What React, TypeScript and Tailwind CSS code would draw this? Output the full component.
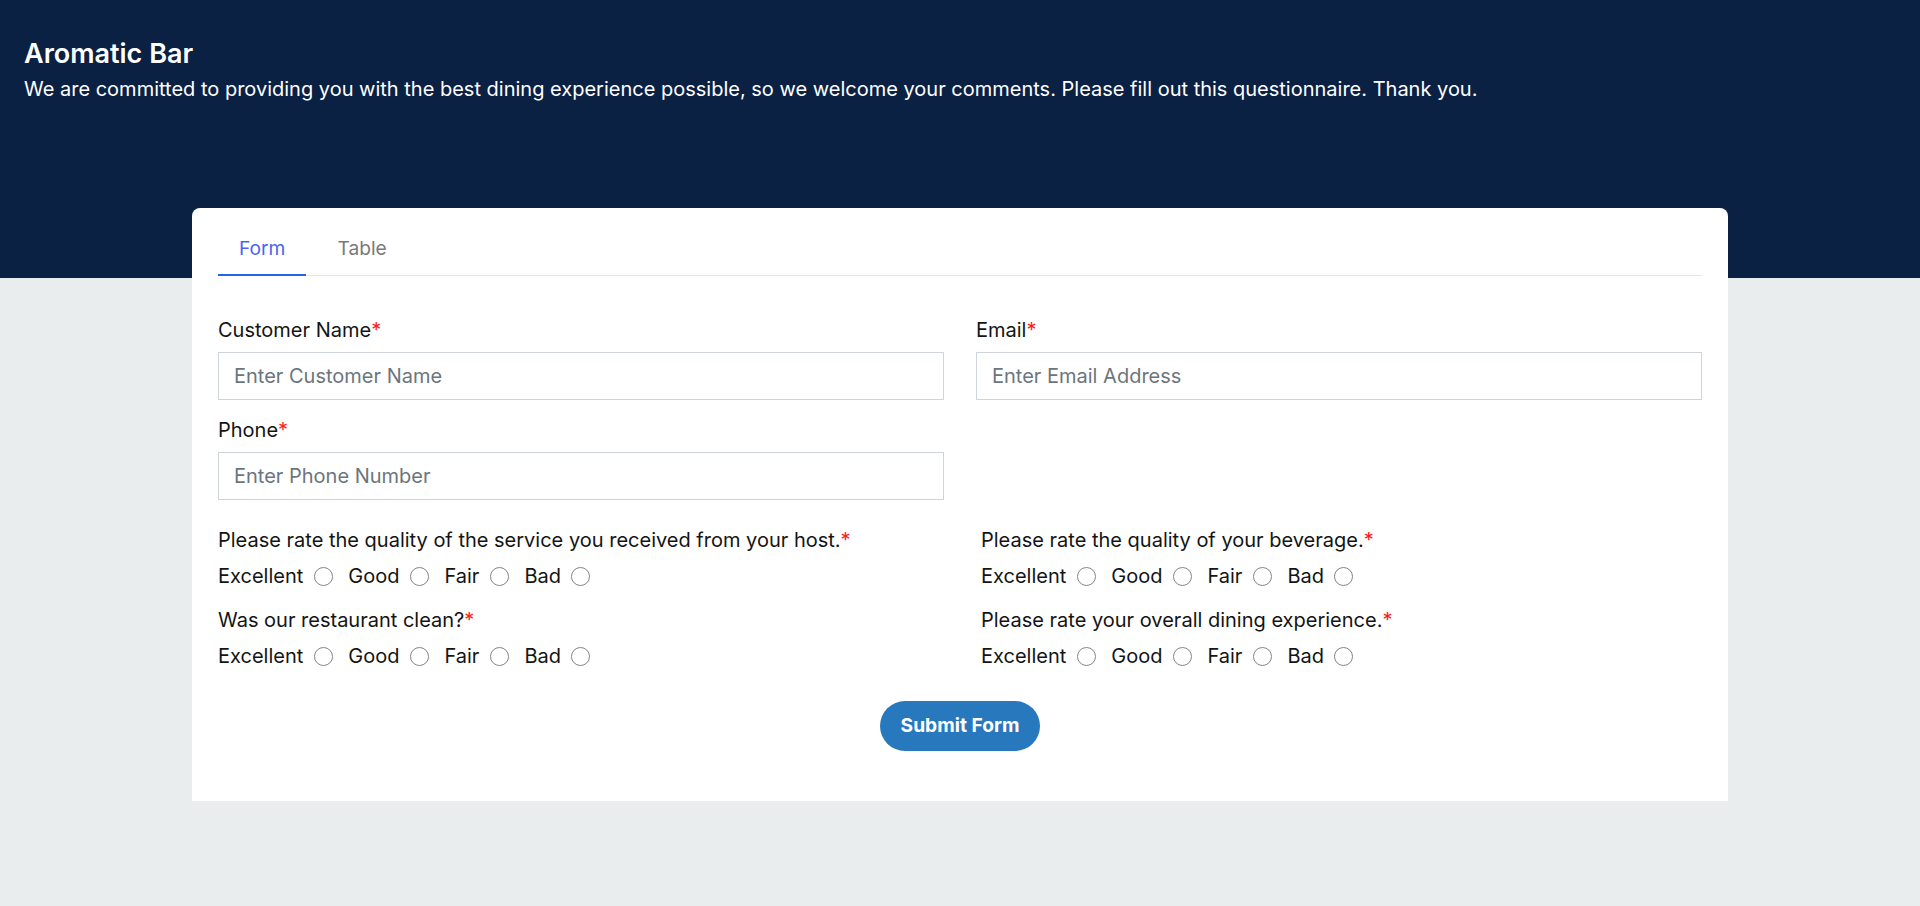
import React from "react";

const Req = () => <span className="text-[#ff1a1a]">*</span>;

function Field({ label, placeholder }: { label: string; placeholder: string }) {
  return (
    <div className="flex flex-col">
      <label className="text-[20px] leading-[28.8px] text-[#141414]">
        {label}
        <Req />
      </label>
      <input
        className="mt-[7px] h-[48.5px] w-full border border-[#ced4da] bg-white pl-[15px] pr-[15px] text-[20px] text-[#212529] outline-none placeholder:text-[#6c757d]"
        placeholder={placeholder}
      />
    </div>
  );
}

function Rating({ question, name, shift }: { question: string; name: string; shift?: boolean }) {
  const opts = ["Excellent", "Good", "Fair", "Bad"];
  return (
    <div className={shift ? "pl-[5px]" : ""}>
      <p className="text-[20px] leading-[28.8px] text-[#141414]">
        {question}
        <Req />
      </p>
      <div className="mt-[6.5px] flex items-center gap-[15.5px] text-[20px] leading-[28.8px] text-[#141414]">
        {opts.map((o) => (
          <label key={o} className="flex items-center">
            <span>{o}</span>
            <input
              type="radio"
              name={name}
              className="ml-[10.5px] h-[19px] w-[19px] appearance-none rounded-full border border-[#858585] bg-white"
            />
          </label>
        ))}
      </div>
    </div>
  );
}

export default function App() {
  return (
    <div className="min-h-screen bg-[#e9edee] font-['Inter','Noto_Sans',sans-serif]">
      <div className="h-[278px] bg-[#0a2144] pl-[24px] pt-[37px] text-white">
        <h1 className="text-[27px] font-semibold leading-[34px]">Aromatic Bar</h1>
        <p className="mt-[4px] text-[20px] leading-[28.8px]">
          We are committed to providing you with the best dining experience possible, so we welcome your
          comments. Please fill out this questionnaire. Thank you.
        </p>
      </div>
      <div className="mx-auto -mt-[70px] w-[1536px] rounded-t-[8px] bg-white px-[26px] pb-[50px] pt-[15px]">
        <div className="flex gap-[10px] border-b border-[#e5e5e5]">
          <button className="-mb-px border-b-2 border-[#2563eb] px-[21px] py-[11px] text-[19.2px] leading-[28.8px] text-[#4a63f2]">
            Form
          </button>
          <button className="-mb-px border-b-2 border-transparent px-[21px] py-[11px] text-[19.2px] leading-[28.8px] text-[#7a7a7a]">
            Table
          </button>
        </div>

        <div className="mt-[40px] grid grid-cols-2 gap-x-[32px] gap-y-[16px]">
          <Field label="Customer Name" placeholder="Enter Customer Name" />
          <Field label="Email" placeholder="Enter Email Address" />
          <Field label="Phone" placeholder="Enter Phone Number" />
          <div />
        </div>

        <div className="mt-[26px] grid grid-cols-2 gap-x-[32px] gap-y-[16px]">
          <Rating question="Please rate the quality of the service you received from your host." name="host" />
          <Rating question="Please rate the quality of your beverage." name="beverage" shift />
          <Rating question="Was our restaurant clean?" name="clean" />
          <Rating question="Please rate your overall dining experience." name="overall" shift />
        </div>

        <div className="mt-[30px] flex justify-center">
          <button className="flex h-[50px] w-[160px] items-center justify-center rounded-full bg-[#2878be] text-[19.2px] font-bold text-white">
            Submit Form
          </button>
        </div>
      </div>
    </div>
  );
}
